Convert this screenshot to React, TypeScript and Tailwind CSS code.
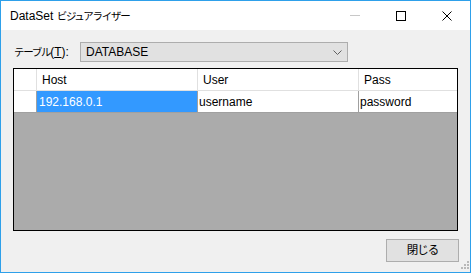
import React from 'react'

const uiFont = { fontFamily: '"Liberation Sans", "Noto Sans CJK JP", sans-serif' }

// Japanese glyphs in the original are narrower than Noto CJK at 12px
const jp = 'text-[10.5px] tracking-[-1.3px]'

function TitleBar() {
  return (
    <div className="flex h-[29px] shrink-0 items-center bg-white">
      <div className="flex-1 pl-[9px] text-[12px] text-black">
        DataSet <span className={jp}>ビジュアライザー</span>
      </div>
      <div className="flex h-full w-[46px] items-center justify-center">
        <div className="h-px w-[10px] bg-[#c8c8c8]" />
      </div>
      <div className="flex h-full w-[46px] items-center justify-center">
        <div className="h-[10px] w-[10px] border border-black" />
      </div>
      <div className="flex h-full w-[46px] items-center justify-center">
        <svg width="10" height="10" viewBox="0 0 10 10">
          <path d="M0.5 0.5 L9.5 9.5 M9.5 0.5 L0.5 9.5" stroke="black" strokeWidth="1" />
        </svg>
      </div>
    </div>
  )
}

function Grid() {
  return (
    <div className="mx-[12px] mt-[6px] flex h-[163px] flex-col border border-black bg-[#ababab]">
      <div className="flex h-[22px] border-b border-[#e0e0e0] bg-white text-[12px]">
        <div className="w-[23px] border-r border-[#e0e0e0]" />
        <div className="flex w-[161px] items-center border-r border-[#e0e0e0] pl-[5px]">Host</div>
        <div className="flex w-[161px] items-center border-r border-[#e0e0e0] pl-[5px]">User</div>
        <div className="flex flex-1 items-center pl-[5px]">Pass</div>
      </div>
      <div className="flex h-[22px] border-b border-[#a0a0a0] bg-white text-[12px]">
        <div className="w-[23px] border-r border-[#a0a0a0]" />
        <div className="flex w-[161px] items-center border-r border-[#a0a0a0] bg-[#3399ff] pl-[2px] text-white">
          192.168.0.1
        </div>
        <div className="flex w-[161px] items-center border-r border-[#a0a0a0] pl-[1px]">username</div>
        <div className="flex flex-1 items-center pl-px">password</div>
      </div>
    </div>
  )
}

export default function App() {
  return (
    <div
      className="flex h-[273px] w-[471px] flex-col border border-[#2ea0ea] bg-[#f0f0f0] text-black"
      style={uiFont}
    >
      <TitleBar />
      <div className="mt-[12px] flex h-[20px] items-center">
        <div className="w-[79px] shrink-0 whitespace-nowrap pl-[13px] text-[12px]">
          <span className={jp}>テーブル</span>(<span className="underline">T</span>):
        </div>
        <div className="flex h-[20px] w-[268px] items-center justify-between border border-[#adadad] bg-[#e1e1e1] pl-[5px] pr-[5px] text-[12px]">
          <span>DATABASE</span>
          <svg width="9" height="5" viewBox="0 0 9 5">
            <path d="M0.5 0.5 L4.5 4.5 L8.5 0.5" stroke="#606060" fill="none" strokeWidth="1" />
          </svg>
        </div>
      </div>
      <Grid />
      <div className="flex justify-end pr-[11px] pt-[8px]">
        <button className="h-[23px] w-[73px] border border-[#adadad] bg-[#e1e1e1] text-[11.5px] tracking-[-1px]">
          閉じる
        </button>
      </div>
      <div className="relative flex-1">
        <svg className="absolute bottom-[1px] right-[1px]" width="10" height="10" viewBox="0 0 10 10">
          <g fill="#b8b8b8">
            <rect x="8" y="0" width="2" height="2" />
            <rect x="5" y="3" width="2" height="2" />
            <rect x="8" y="3" width="2" height="2" />
            <rect x="2" y="6" width="2" height="2" />
            <rect x="5" y="6" width="2" height="2" />
            <rect x="8" y="6" width="2" height="2" />
          </g>
        </svg>
      </div>
    </div>
  )
}
